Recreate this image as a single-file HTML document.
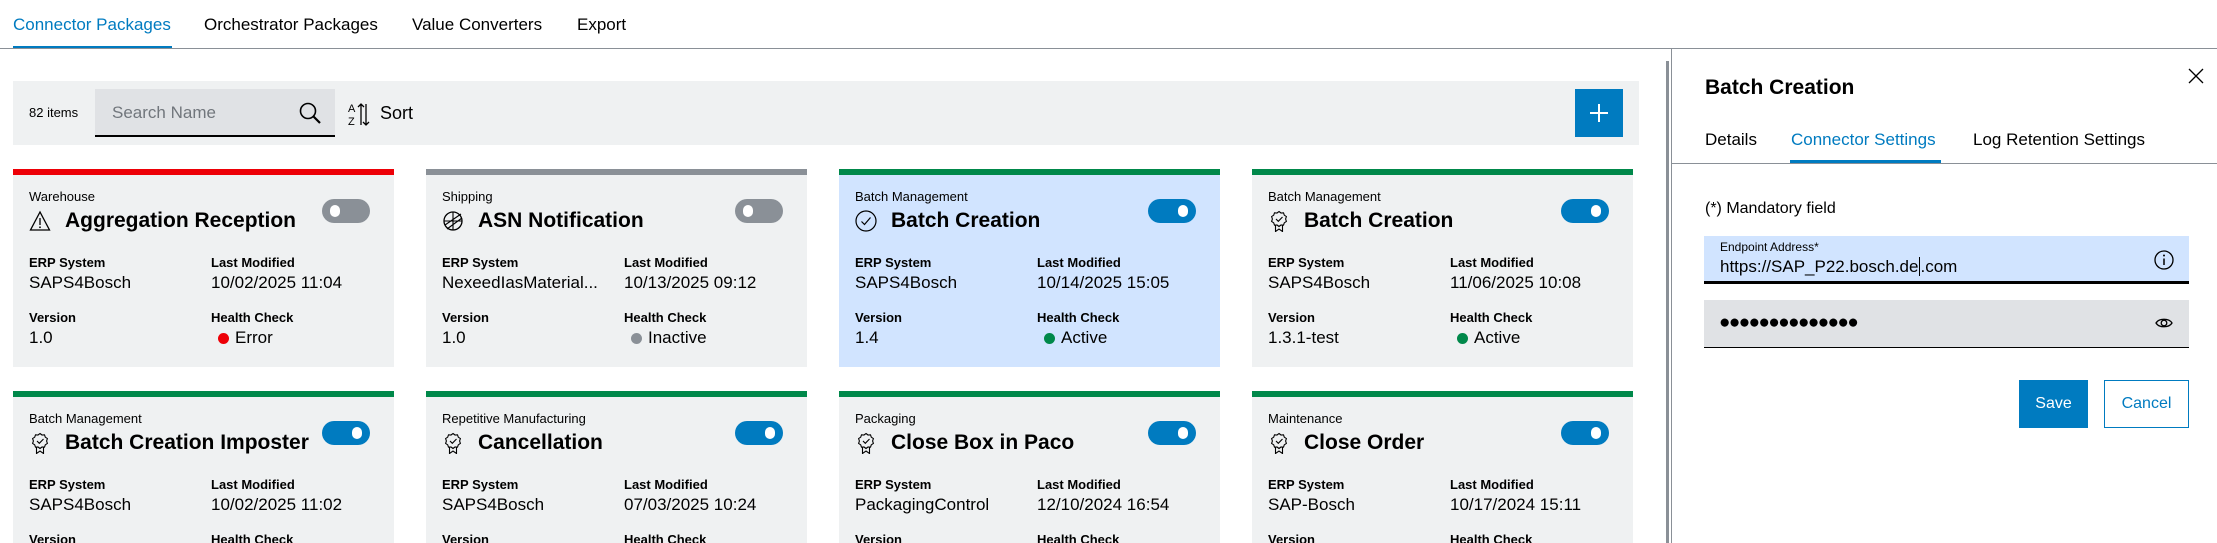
<!DOCTYPE html>
<html><head><meta charset="utf-8"><style>
*{box-sizing:border-box;margin:0;padding:0}
html,body{width:2217px;height:543px;overflow:hidden}
body{background:#fff;font-family:"Liberation Sans",sans-serif;color:#000;position:relative}
.a{position:absolute;white-space:nowrap}
.tab{position:absolute;top:14px;font-size:17px;line-height:22px}
.card{position:absolute;width:381px;height:198px;background:#eff1f2;overflow:hidden}
.r2{height:152px}
.card .bar{position:absolute;left:0;top:0;width:100%;height:6px}
.cat{position:absolute;left:16px;top:20px;font-size:13px;line-height:16px}
.ic{position:absolute;left:16px;top:41px;width:22px;height:22px}
.ttl{position:absolute;left:52px;top:37px;font-size:21px;line-height:30px;font-weight:bold}
.tg{position:absolute;left:309px;top:30px;width:48px;height:24px;border-radius:12px;background:#007bc0}
.tg:after{content:"";position:absolute;top:6px;right:8px;width:10px;height:12px;border-radius:6px;background:#fff}
.tg.off{background:#8a9097}.tg.off:after{right:auto;left:8px}
.lb{position:absolute;font-size:13px;line-height:18px;font-weight:bold}
.vl{position:absolute;font-size:17px;line-height:20px}
.dot{display:inline-block;width:11px;height:11px;border-radius:6px;margin:0 6px 0 0;vertical-align:-1px}
</style></head><body>
<div class="tab" style="left:13px;color:#007bc0">Connector Packages</div>
<div class="a" style="left:13px;top:46px;width:159px;height:3px;background:#007bc0"></div>
<div class="tab" style="left:204px">Orchestrator Packages</div>
<div class="tab" style="left:412px">Value Converters</div>
<div class="tab" style="left:577px">Export</div>
<div class="a" style="left:0;top:48px;width:2217px;height:1px;background:#8a9097"></div>

<div class="a" style="left:13px;top:81px;width:1626px;height:64px;background:#eff1f2"></div>
<div class="a" style="left:29px;top:104px;font-size:13px;line-height:18px">82 items</div>
<div class="a" style="left:95px;top:89px;width:240px;height:48px;background:#e0e2e5;border-bottom:2px solid #000"></div>
<div class="a" style="left:112px;top:102px;font-size:17px;line-height:22px;color:#71767c">Search Name</div>
<svg class="a" style="left:298px;top:101px" width="26" height="26" viewBox="0 0 26 26"><circle cx="10" cy="10" r="7.5" fill="none" stroke="#000" stroke-width="1.6"/><path d="M15.5 15.5l6.5 6.5" stroke="#000" stroke-width="2.2"/></svg>
<svg class="a" style="left:348px;top:101px" width="22" height="26" viewBox="0 0 22 26"><text x="0" y="11" font-size="11" font-family="Liberation Sans">A</text><text x="0" y="24" font-size="11" font-family="Liberation Sans">Z</text><path d="M13 24V3M10 6l3-3 3 3M18 3v21M15 21l3 3 3-3" fill="none" stroke="#000" stroke-width="1.3"/></svg>
<div class="a" style="left:380px;top:102px;font-size:18px;line-height:22px">Sort</div>
<div class="a" style="left:1575px;top:89px;width:48px;height:48px;background:#007bc0"></div>
<div class="a" style="left:1590px;top:112px;width:18px;height:1.5px;background:#fff"></div>
<div class="a" style="left:1598px;top:104px;width:1.5px;height:18px;background:#fff"></div>

<div class="a" style="left:1666px;top:61px;width:3px;height:482px;background:#8a9097"></div>
<div class="a" style="left:1671px;top:48px;width:1px;height:495px;background:#8a9097"></div>

<div class="card" style="left:13px;top:169px">
 <div class="bar" style="background:#ed0007"></div>
 <div class="cat">Warehouse</div>
 <svg class="ic" viewBox="0 0 22 22"><path d="M11 2L1.5 20h19z" fill="none" stroke="#000" stroke-width="1.3"/><path d="M11 8v7" stroke="#000" stroke-width="1.3"/><circle cx="11" cy="17.3" r="0.9"/></svg>
 <div class="ttl">Aggregation Reception</div>
 <div class="tg off"></div>
 <div class="lb" style="left:16px;top:85px">ERP System</div><div class="vl" style="left:16px;top:104px">SAPS4Bosch</div>
 <div class="lb" style="left:198px;top:85px">Last Modified</div><div class="vl" style="left:198px;top:104px">10/02/2025 11:04</div>
 <div class="lb" style="left:16px;top:140px">Version</div><div class="vl" style="left:16px;top:159px">1.0</div>
 <div class="lb" style="left:198px;top:140px">Health Check</div><div class="vl" style="left:205px;top:159px"><span class="dot" style="background:#ed0007"></span>Error</div>
</div>
<div class="card" style="left:426px;top:169px">
 <div class="bar" style="background:#8a9097"></div>
 <div class="cat">Shipping</div>
 <svg class="ic" viewBox="0 0 22 22"><circle cx="11" cy="11" r="9" fill="none" stroke="#000" stroke-width="1.3"/><path d="M3 15L19 4M5 19L20 8M11 2v18M2 11h18" fill="none" stroke="#000" stroke-width="1.1"/></svg>
 <div class="ttl">ASN Notification</div>
 <div class="tg off"></div>
 <div class="lb" style="left:16px;top:85px">ERP System</div><div class="vl" style="left:16px;top:104px">NexeedIasMaterial...</div>
 <div class="lb" style="left:198px;top:85px">Last Modified</div><div class="vl" style="left:198px;top:104px">10/13/2025 09:12</div>
 <div class="lb" style="left:16px;top:140px">Version</div><div class="vl" style="left:16px;top:159px">1.0</div>
 <div class="lb" style="left:198px;top:140px">Health Check</div><div class="vl" style="left:205px;top:159px"><span class="dot" style="background:#8a9097"></span>Inactive</div>
</div>
<div class="card" style="left:839px;top:169px;background:#d1e4ff">
 <div class="bar" style="background:#00884a"></div>
 <div class="cat">Batch Management</div>
 <svg class="ic" viewBox="0 0 22 22"><circle cx="11" cy="11" r="10" fill="none" stroke="#000" stroke-width="1.2"/><path d="M6.5 11.5l3 3 6-7" fill="none" stroke="#000" stroke-width="1.2"/></svg>
 <div class="ttl">Batch Creation</div>
 <div class="tg"></div>
 <div class="lb" style="left:16px;top:85px">ERP System</div><div class="vl" style="left:16px;top:104px">SAPS4Bosch</div>
 <div class="lb" style="left:198px;top:85px">Last Modified</div><div class="vl" style="left:198px;top:104px">10/14/2025 15:05</div>
 <div class="lb" style="left:16px;top:140px">Version</div><div class="vl" style="left:16px;top:159px">1.4</div>
 <div class="lb" style="left:198px;top:140px">Health Check</div><div class="vl" style="left:205px;top:159px"><span class="dot" style="background:#00884a"></span>Active</div>
</div>
<div class="card" style="left:1252px;top:169px">
 <div class="bar" style="background:#00884a"></div>
 <div class="cat">Batch Management</div>
 <svg class="ic" viewBox="0 0 22 22"><path d="M11 1.5l2 1.5 2.5-.2.8 2.4 2.1 1.4-.8 2.4.8 2.4-2.1 1.4-.8 2.4-2.5-.2-2 1.5-2-1.5-2.5.2-.8-2.4-2.1-1.4.8-2.4-.8-2.4 2.1-1.4.8-2.4 2.5.2z" fill="none" stroke="#000" stroke-width="1.1"/><path d="M8 9l2.3 2.3L14.5 7" fill="none" stroke="#000" stroke-width="1.1"/><path d="M7.5 15.5v6l3.5-2.5 3.5 2.5v-6" fill="none" stroke="#000" stroke-width="1.1"/></svg>
 <div class="ttl">Batch Creation</div>
 <div class="tg"></div>
 <div class="lb" style="left:16px;top:85px">ERP System</div><div class="vl" style="left:16px;top:104px">SAPS4Bosch</div>
 <div class="lb" style="left:198px;top:85px">Last Modified</div><div class="vl" style="left:198px;top:104px">11/06/2025 10:08</div>
 <div class="lb" style="left:16px;top:140px">Version</div><div class="vl" style="left:16px;top:159px">1.3.1-test</div>
 <div class="lb" style="left:198px;top:140px">Health Check</div><div class="vl" style="left:205px;top:159px"><span class="dot" style="background:#00884a"></span>Active</div>
</div>

<div class="card r2" style="left:13px;top:391px">
 <div class="bar" style="background:#00884a"></div>
 <div class="cat">Batch Management</div>
 <svg class="ic" viewBox="0 0 22 22"><path d="M11 1.5l2 1.5 2.5-.2.8 2.4 2.1 1.4-.8 2.4.8 2.4-2.1 1.4-.8 2.4-2.5-.2-2 1.5-2-1.5-2.5.2-.8-2.4-2.1-1.4.8-2.4-.8-2.4 2.1-1.4.8-2.4 2.5.2z" fill="none" stroke="#000" stroke-width="1.1"/><path d="M8 9l2.3 2.3L14.5 7" fill="none" stroke="#000" stroke-width="1.1"/><path d="M7.5 15.5v6l3.5-2.5 3.5 2.5v-6" fill="none" stroke="#000" stroke-width="1.1"/></svg>
 <div class="ttl">Batch Creation Imposter</div>
 <div class="tg"></div>
 <div class="lb" style="left:16px;top:85px">ERP System</div><div class="vl" style="left:16px;top:104px">SAPS4Bosch</div>
 <div class="lb" style="left:198px;top:85px">Last Modified</div><div class="vl" style="left:198px;top:104px">10/02/2025 11:02</div>
 <div class="lb" style="left:16px;top:140px">Version</div>
 <div class="lb" style="left:198px;top:140px">Health Check</div>
</div>
<div class="card r2" style="left:426px;top:391px">
 <div class="bar" style="background:#00884a"></div>
 <div class="cat">Repetitive Manufacturing</div>
 <svg class="ic" viewBox="0 0 22 22"><path d="M11 1.5l2 1.5 2.5-.2.8 2.4 2.1 1.4-.8 2.4.8 2.4-2.1 1.4-.8 2.4-2.5-.2-2 1.5-2-1.5-2.5.2-.8-2.4-2.1-1.4.8-2.4-.8-2.4 2.1-1.4.8-2.4 2.5.2z" fill="none" stroke="#000" stroke-width="1.1"/><path d="M8 9l2.3 2.3L14.5 7" fill="none" stroke="#000" stroke-width="1.1"/><path d="M7.5 15.5v6l3.5-2.5 3.5 2.5v-6" fill="none" stroke="#000" stroke-width="1.1"/></svg>
 <div class="ttl">Cancellation</div>
 <div class="tg"></div>
 <div class="lb" style="left:16px;top:85px">ERP System</div><div class="vl" style="left:16px;top:104px">SAPS4Bosch</div>
 <div class="lb" style="left:198px;top:85px">Last Modified</div><div class="vl" style="left:198px;top:104px">07/03/2025 10:24</div>
 <div class="lb" style="left:16px;top:140px">Version</div>
 <div class="lb" style="left:198px;top:140px">Health Check</div>
</div>
<div class="card r2" style="left:839px;top:391px">
 <div class="bar" style="background:#00884a"></div>
 <div class="cat">Packaging</div>
 <svg class="ic" viewBox="0 0 22 22"><path d="M11 1.5l2 1.5 2.5-.2.8 2.4 2.1 1.4-.8 2.4.8 2.4-2.1 1.4-.8 2.4-2.5-.2-2 1.5-2-1.5-2.5.2-.8-2.4-2.1-1.4.8-2.4-.8-2.4 2.1-1.4.8-2.4 2.5.2z" fill="none" stroke="#000" stroke-width="1.1"/><path d="M8 9l2.3 2.3L14.5 7" fill="none" stroke="#000" stroke-width="1.1"/><path d="M7.5 15.5v6l3.5-2.5 3.5 2.5v-6" fill="none" stroke="#000" stroke-width="1.1"/></svg>
 <div class="ttl">Close Box in Paco</div>
 <div class="tg"></div>
 <div class="lb" style="left:16px;top:85px">ERP System</div><div class="vl" style="left:16px;top:104px">PackagingControl</div>
 <div class="lb" style="left:198px;top:85px">Last Modified</div><div class="vl" style="left:198px;top:104px">12/10/2024 16:54</div>
 <div class="lb" style="left:16px;top:140px">Version</div>
 <div class="lb" style="left:198px;top:140px">Health Check</div>
</div>
<div class="card r2" style="left:1252px;top:391px">
 <div class="bar" style="background:#00884a"></div>
 <div class="cat">Maintenance</div>
 <svg class="ic" viewBox="0 0 22 22"><path d="M11 1.5l2 1.5 2.5-.2.8 2.4 2.1 1.4-.8 2.4.8 2.4-2.1 1.4-.8 2.4-2.5-.2-2 1.5-2-1.5-2.5.2-.8-2.4-2.1-1.4.8-2.4-.8-2.4 2.1-1.4.8-2.4 2.5.2z" fill="none" stroke="#000" stroke-width="1.1"/><path d="M8 9l2.3 2.3L14.5 7" fill="none" stroke="#000" stroke-width="1.1"/><path d="M7.5 15.5v6l3.5-2.5 3.5 2.5v-6" fill="none" stroke="#000" stroke-width="1.1"/></svg>
 <div class="ttl">Close Order</div>
 <div class="tg"></div>
 <div class="lb" style="left:16px;top:85px">ERP System</div><div class="vl" style="left:16px;top:104px">SAP-Bosch</div>
 <div class="lb" style="left:198px;top:85px">Last Modified</div><div class="vl" style="left:198px;top:104px">10/17/2024 15:11</div>
 <div class="lb" style="left:16px;top:140px">Version</div>
 <div class="lb" style="left:198px;top:140px">Health Check</div>
</div>

<div class="a" style="left:1705px;top:74px;font-size:21px;line-height:28px;font-weight:bold">Batch Creation</div>
<svg class="a" style="left:2187px;top:67px" width="18" height="18" viewBox="0 0 18 18"><path d="M2 2l14 14M16 2L2 16" stroke="#000" stroke-width="1.3"/></svg>
<div class="a" style="left:1705px;top:129px;font-size:17px;line-height:22px">Details</div>
<div class="a" style="left:1791px;top:129px;font-size:17px;line-height:22px;color:#007bc0">Connector Settings</div>
<div class="a" style="left:1973px;top:129px;font-size:17px;line-height:22px">Log Retention Settings</div>
<div class="a" style="left:1672px;top:163px;width:545px;height:1px;background:#8a9097"></div>
<div class="a" style="left:1790px;top:160px;width:151px;height:3px;background:#007bc0"></div>
<div class="a" style="left:1705px;top:198px;font-size:16px;line-height:22px">(*) Mandatory field</div>

<div class="a" style="left:1704px;top:236px;width:485px;height:48px;background:#d1e4ff;border-bottom:3px solid #000"></div>
<div class="a" style="left:1720px;top:240px;font-size:12px;line-height:15px">Endpoint Address*</div>
<div class="a" style="left:1720px;top:256px;font-size:17px;line-height:22px">https://SAP_P22.bosch.de<span style="border-left:1px solid #000;margin-left:1px"></span>.com</div>

<svg class="a" style="left:2154px;top:250px" width="20" height="20" viewBox="0 0 20 20"><circle cx="10" cy="10" r="9" fill="none" stroke="#000" stroke-width="1.3"/><path d="M10 8.5v6.5" stroke="#000" stroke-width="1.5"/><circle cx="10" cy="5.5" r="1"/></svg>

<div class="a" style="left:1704px;top:300px;width:485px;height:48px;background:#e0e2e5;border-bottom:1px solid #000"></div>
<div class="a" style="left:1719px;top:312px;font-size:19px;line-height:22px;letter-spacing:-1.6px">●●●●●●●●●●●●●●</div>
<svg class="a" style="left:2155px;top:316px" width="18" height="14" viewBox="0 0 18 14"><path d="M1 7C4 2 14 2 17 7C14 12 4 12 1 7z" fill="none" stroke="#000" stroke-width="1.3"/><circle cx="9" cy="7" r="2.8" fill="none" stroke="#000" stroke-width="1.3"/></svg>

<div class="a" style="left:2019px;top:380px;width:69px;height:48px;background:#007bc0;color:#fff;font-size:16px;line-height:48px;text-align:center">Save</div>
<div class="a" style="left:2104px;top:380px;width:85px;height:48px;border:1px solid #007bc0;color:#007bc0;font-size:16px;line-height:46px;text-align:center">Cancel</div>
</body></html>
